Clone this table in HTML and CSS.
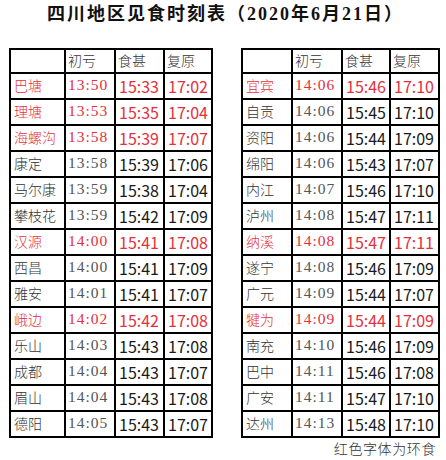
FILE: index.html
```html
<!DOCTYPE html>
<html lang="zh-CN">
<head>
<meta charset="utf-8">
<title>四川地区见食时刻表</title>
<link rel="stylesheet" href="styles.css">
</head>
<body>
<div class="page">
  <h1 class="title">四川地区见食时刻表（<span class="num">2020</span>年<span class="num">6</span>月<span class="num">21</span>日）</h1>
  <div class="tables">
    <div class="side">
      <div class="tbl tbl-left">
        <div class="c"></div><div class="c h">初亏</div><div class="c h">食甚</div><div class="c h">复原</div>
        <div class="c n r">巴塘</div><div class="c t r">13:50</div><div class="c s r">15:33</div><div class="c s r">17:02</div>
        <div class="c n r">理塘</div><div class="c t r">13:53</div><div class="c s r">15:35</div><div class="c s r">17:04</div>
        <div class="c n r">海螺沟</div><div class="c t r">13:58</div><div class="c s r">15:39</div><div class="c s r">17:07</div>
        <div class="c n">康定</div><div class="c t">13:58</div><div class="c s">15:39</div><div class="c s">17:06</div>
        <div class="c n">马尔康</div><div class="c t">13:59</div><div class="c s">15:38</div><div class="c s">17:04</div>
        <div class="c n">攀枝花</div><div class="c t">13:59</div><div class="c s">15:42</div><div class="c s">17:09</div>
        <div class="c n r">汉源</div><div class="c t r">14:00</div><div class="c s r">15:41</div><div class="c s r">17:08</div>
        <div class="c n">西昌</div><div class="c t">14:00</div><div class="c s">15:41</div><div class="c s">17:09</div>
        <div class="c n">雅安</div><div class="c t">14:01</div><div class="c s">15:41</div><div class="c s">17:07</div>
        <div class="c n r">峨边</div><div class="c t r">14:02</div><div class="c s r">15:42</div><div class="c s r">17:08</div>
        <div class="c n">乐山</div><div class="c t">14:03</div><div class="c s">15:43</div><div class="c s">17:08</div>
        <div class="c n">成都</div><div class="c t">14:04</div><div class="c s">15:43</div><div class="c s">17:07</div>
        <div class="c n">眉山</div><div class="c t">14:04</div><div class="c s">15:43</div><div class="c s">17:08</div>
        <div class="c n">德阳</div><div class="c t">14:05</div><div class="c s">15:43</div><div class="c s">17:07</div>
      </div>
    </div>
    <div class="side">
      <div class="tbl tbl-right">
        <div class="c"></div><div class="c h">初亏</div><div class="c h">食甚</div><div class="c h">复原</div>
        <div class="c n r">宜宾</div><div class="c t r">14:06</div><div class="c s r">15:46</div><div class="c s r">17:10</div>
        <div class="c n">自贡</div><div class="c t">14:06</div><div class="c s">15:45</div><div class="c s">17:10</div>
        <div class="c n">资阳</div><div class="c t">14:06</div><div class="c s">15:44</div><div class="c s">17:09</div>
        <div class="c n">绵阳</div><div class="c t">14:06</div><div class="c s">15:43</div><div class="c s">17:07</div>
        <div class="c n">内江</div><div class="c t">14:07</div><div class="c s">15:46</div><div class="c s">17:10</div>
        <div class="c n">泸州</div><div class="c t">14:08</div><div class="c s">15:47</div><div class="c s">17:11</div>
        <div class="c n r">纳溪</div><div class="c t r">14:08</div><div class="c s r">15:47</div><div class="c s r">17:11</div>
        <div class="c n">遂宁</div><div class="c t">14:08</div><div class="c s">15:46</div><div class="c s">17:09</div>
        <div class="c n">广元</div><div class="c t">14:09</div><div class="c s">15:44</div><div class="c s">17:07</div>
        <div class="c n r">犍为</div><div class="c t r">14:09</div><div class="c s r">15:44</div><div class="c s r">17:09</div>
        <div class="c n">南充</div><div class="c t">14:10</div><div class="c s">15:46</div><div class="c s">17:09</div>
        <div class="c n">巴中</div><div class="c t">14:11</div><div class="c s">15:46</div><div class="c s">17:08</div>
        <div class="c n">广安</div><div class="c t">14:11</div><div class="c s">15:47</div><div class="c s">17:10</div>
        <div class="c n">达州</div><div class="c t">14:13</div><div class="c s">15:48</div><div class="c s">17:10</div>
      </div>
      <div class="note">红色字体为环食</div>
    </div>
  </div>
</div>
</body>
</html>
```

FILE: styles.css
```css
html, body {
  margin: 0;
  padding: 0;
  background: #fff;
}

.page {
  width: 446px;
  height: 460px;
  font-family: "Noto Sans CJK SC", sans-serif;
  color: #222;
}

.title {
  margin: 0;
  padding: 4px 0 0 5px;
  height: 45px;
  box-sizing: border-box;
  text-align: center;
  font-family: "Liberation Serif", "Noto Sans CJK SC", serif;
  font-size: 18px;
  line-height: 20px;
  font-weight: 700;
  letter-spacing: 2px;
  color: #111;
}

.title .num {
  font-family: "Liberation Serif", serif;
}

.tables {
  display: flex;
  align-items: flex-start;
  gap: 28px;
  padding: 3px 0 0 9px;
}

.side {
  display: flex;
  flex-direction: column;
}

.tbl {
  display: grid;
  background: #000;
  padding: 2px;
  gap: 2px;
  grid-template-rows: 22px repeat(14, 24px);
}

.tbl-left {
  grid-template-columns: 53px 48px 47px 46px;
}

.tbl-right {
  grid-template-columns: 48px 48px 46px 47px;
}

.c {
  background: #fff;
  display: flex;
  align-items: center;
  padding-left: 2px;
  line-height: 1;
  overflow: hidden;
  white-space: nowrap;
}

.h {
  font-size: 14px;
  font-weight: 300;
  color: #333;
  padding-bottom: 3px;
}

.n {
  font-size: 14px;
  font-weight: 300;
  color: #333;
  padding-left: 3px;
  padding-bottom: 2px;
}

.t {
  font-family: "Liberation Serif", serif;
  font-size: 15.5px;
  letter-spacing: 1px;
  color: #555;
  padding-bottom: 3px;
}

.s {
  font-family: "Noto Sans CJK SC", sans-serif;
  font-size: 16px;
  color: #1a1a1a;
  padding-left: 3px;
}

.r {
  color: #e5303c;
}

.note {
  align-self: flex-end;
  margin-right: 4px;
  margin-top: 2px;
  font-size: 14px;
  font-weight: 300;
  line-height: 16px;
  letter-spacing: 0.6px;
  color: #333;
}
```
